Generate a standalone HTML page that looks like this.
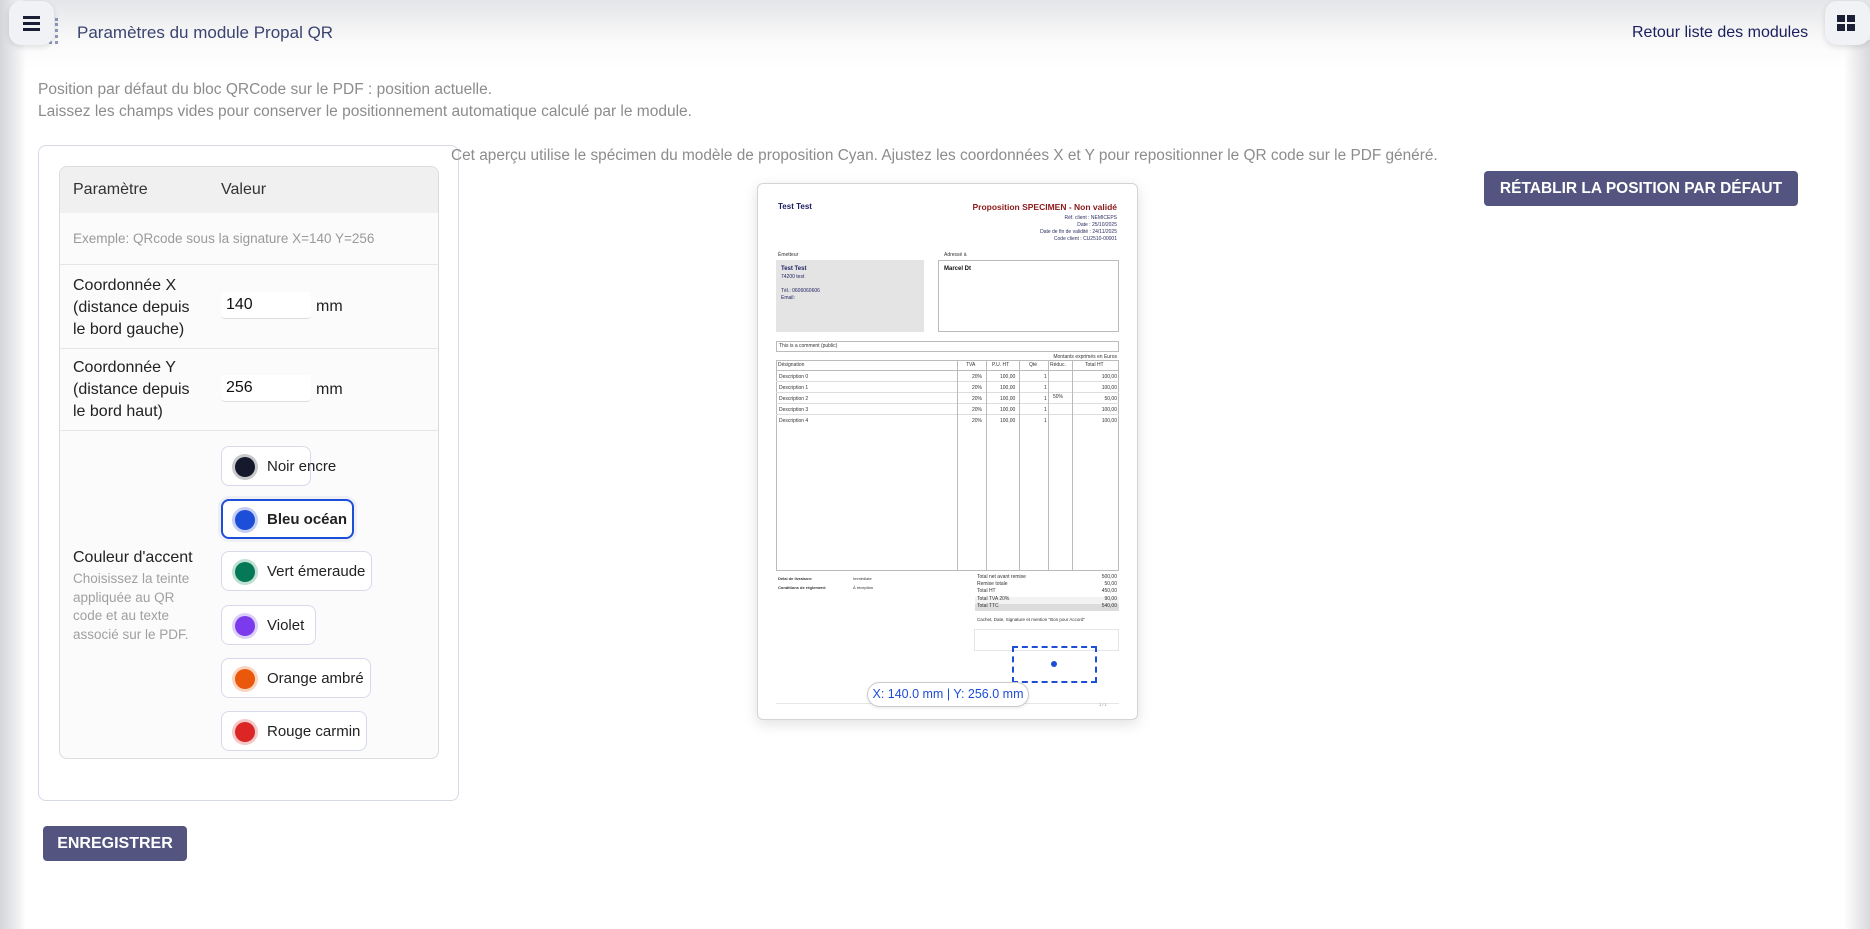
<!DOCTYPE html>
<html><head><meta charset="utf-8"><style>
*{box-sizing:border-box;margin:0;padding:0}
body{width:1870px;height:929px;overflow:hidden;background:#fff;font-family:"Liberation Sans",Arial,sans-serif;position:relative}
.abs{position:absolute}
.topbar{left:0;top:0;width:1870px;height:70px;background:linear-gradient(#e4e5e8,#fafafa 60%,#fff)}
.lshade{left:0;top:0;width:26px;height:929px;background:linear-gradient(90deg,#d4d5d9,#f4f4f6 80%,rgba(255,255,255,0))}
.rshade{right:0;top:40px;width:26px;height:889px;background:linear-gradient(270deg,#d8d9dd,rgba(255,255,255,0))}
.iconbtn{background:#f1f2f5;border-radius:12px;box-shadow:0 2px 6px rgba(0,0,0,.12)}
.t{white-space:nowrap}
.btn{background:#545480;color:#fff;font-weight:bold;border-radius:4px;text-align:center;font-size:16px;white-space:nowrap}
.opt{left:221px;height:40px;background:#fff;border:1px solid #d6daea;border-radius:8px;font-size:15px;color:#222;white-space:nowrap}
.opt .dot{position:absolute;left:13px;top:10px;width:20px;height:20px;border-radius:50%}
.opt span{position:absolute;left:45px;top:11px}
.p{font-size:5px;color:#333;white-space:nowrap;position:absolute}
.tb{position:absolute;border-top:1px solid #bbb}
.vl{position:absolute;border-left:1px solid #bbb;top:360px;height:211px}
</style></head><body>
<div class="abs topbar"></div>
<div class="abs lshade"></div>
<div class="abs rshade"></div>

<div class="abs" style="left:44px;top:18px;width:14px;height:26px;border:3px dotted #4a5a90;opacity:.6"></div>
<div class="abs iconbtn" style="left:9px;top:1px;width:45px;height:44px"></div>
<div class="abs" style="left:23px;top:16px;width:17px;height:3px;background:#1a1f36"></div>
<div class="abs" style="left:23px;top:22px;width:17px;height:3px;background:#1a1f36"></div>
<div class="abs" style="left:23px;top:28px;width:17px;height:3px;background:#1a1f36"></div>
<div class="abs t" style="left:77px;top:23px;font-size:17px;color:#3b4470">Paramètres du module Propal QR</div>
<div class="abs t" style="left:1632px;top:24px;font-size:16px;color:#1a1f5e">Retour liste des modules</div>
<div class="abs iconbtn" style="left:1825px;top:1px;width:45px;height:44px"></div>
<div class="abs" style="left:1837px;top:15px;width:8px;height:7px;background:#1a1f36"></div>
<div class="abs" style="left:1847px;top:15px;width:8px;height:7px;background:#1a1f36"></div>
<div class="abs" style="left:1837px;top:24px;width:8px;height:7px;background:#1a1f36"></div>
<div class="abs" style="left:1847px;top:24px;width:8px;height:7px;background:#1a1f36"></div>

<div class="abs t" style="left:38px;top:81px;font-size:15.5px;color:#8c8c8c">Position par défaut du bloc QRCode sur le PDF : position actuelle.</div>
<div class="abs t" style="left:38px;top:103px;font-size:15.5px;color:#8c8c8c">Laissez les champs vides pour conserver le positionnement automatique calculé par le module.</div>

<div class="abs" style="left:38px;top:145px;width:421px;height:656px;border:1px solid #d6dae6;border-radius:8px;background:#fff"></div>
<div class="abs" style="left:59px;top:166px;width:380px;height:593px;border:1px solid #dcdcdc;border-radius:8px;background:#fbfbfb;overflow:hidden">
 <div style="height:46px;background:#f0f0f0"></div>
 <div style="position:absolute;top:97px;left:0;right:0;border-top:1px solid #e6e6e6"></div>
 <div style="position:absolute;top:181px;left:0;right:0;border-top:1px solid #e6e6e6"></div>
 <div style="position:absolute;top:263px;left:0;right:0;border-top:1px solid #e6e6e6"></div>
</div>
<div class="abs t" style="left:73px;top:181px;font-size:16px;color:#333">Paramètre</div>
<div class="abs t" style="left:221px;top:181px;font-size:16px;color:#333">Valeur</div>
<div class="abs t" style="left:73px;top:231px;font-size:13.5px;color:#9a9a9a">Exemple: QRcode sous la signature X=140 Y=256</div>
<div class="abs" style="left:73px;top:275px;font-size:16px;color:#222;line-height:22px">Coordonnée X<br>(distance depuis<br>le bord gauche)</div>
<div class="abs" style="left:221px;top:292px;width:90px;height:27px;background:#fff;border-bottom:1px solid #ddd;border-radius:4px;font-size:16px;padding:4px 5px;color:#111">140</div>
<div class="abs t" style="left:316px;top:298px;font-size:16px;color:#222">mm</div>
<div class="abs" style="left:73px;top:357px;font-size:16px;color:#222;line-height:22px">Coordonnée Y<br>(distance depuis<br>le bord haut)</div>
<div class="abs" style="left:221px;top:375px;width:90px;height:27px;background:#fff;border-bottom:1px solid #ddd;border-radius:4px;font-size:16px;padding:4px 5px;color:#111">256</div>
<div class="abs t" style="left:316px;top:381px;font-size:16px;color:#222">mm</div>

<div class="abs t" style="left:73px;top:549px;font-size:16px;color:#222">Couleur d'accent</div>
<div class="abs" style="left:73px;top:570px;font-size:13.5px;color:#a0a0a0;line-height:18.5px">Choisissez la teinte<br>appliquée au QR<br>code et au texte<br>associé sur le PDF.</div>

<div class="abs opt" style="top:446px;width:90px"><div class="dot" style="background:#141a2b;box-shadow:0 0 0 3px #c9c9cc"></div><span>Noir encre</span></div>
<div class="abs opt" style="top:499px;width:133px;border:2px solid #1d4ed8;box-shadow:0 0 0 3px #eef0f5"><div class="dot" style="left:12px;top:9px;background:#1d4ed8;box-shadow:0 0 0 3px #c4cdf2"></div><span style="left:44px;top:10px;font-weight:bold">Bleu océan</span></div>
<div class="abs opt" style="top:551px;width:151px"><div class="dot" style="background:#047857;box-shadow:0 0 0 3px #bfe0d3"></div><span>Vert émeraude</span></div>
<div class="abs opt" style="top:605px;width:95px"><div class="dot" style="background:#7c3aed;box-shadow:0 0 0 3px #ddd0f8"></div><span>Violet</span></div>
<div class="abs opt" style="top:658px;width:150px"><div class="dot" style="background:#ea580c;box-shadow:0 0 0 3px #f8d5c0"></div><span>Orange ambré</span></div>
<div class="abs opt" style="top:711px;width:146px"><div class="dot" style="background:#dc2626;box-shadow:0 0 0 3px #f4c8c8"></div><span>Rouge carmin</span></div>

<div class="abs btn" style="left:43px;top:826px;width:144px;height:35px;line-height:35px">ENREGISTRER</div>

<div class="abs t" style="left:451px;top:147px;font-size:15.4px;color:#8c8c8c">Cet aperçu utilise le spécimen du modèle de proposition Cyan. Ajustez les coordonnées X et Y pour repositionner le QR code sur le PDF généré.</div>
<div class="abs btn" style="left:1484px;top:171px;width:314px;height:35px;line-height:35px;font-size:15.5px">RÉTABLIR LA POSITION PAR DÉFAUT</div>

<!-- PDF page -->
<div class="abs" style="left:757px;top:183px;width:381px;height:537px;background:#fff;border:1px solid #d4d4d4;border-radius:6px;box-shadow:0 4px 14px rgba(0,0,0,.12)"></div>
<div class="abs t" style="left:778px;top:202px;font-size:8px;font-weight:bold;color:#1a1f5e">Test Test</div>
<div class="abs t" style="right:753px;top:202px;font-size:8.5px;font-weight:bold;color:#8b1a1a">Proposition SPECIMEN - Non validé</div>
<div class="p" style="right:753px;top:215px;text-align:right;line-height:7px;color:#2a2f5e">Réf. client : NEMICEPS<br>Date : 25/10/2025<br>Date de fin de validité : 24/11/2025<br>Code client : CU2510-00001</div>
<div class="p" style="left:778px;top:252px">Émetteur</div>
<div class="p" style="left:944px;top:252px">Adressé à</div>
<div class="abs" style="left:776px;top:260px;width:148px;height:72px;background:#e4e4e4"></div>
<div class="abs" style="left:938px;top:260px;width:181px;height:72px;border:1px solid #bbb"></div>
<div class="p" style="left:781px;top:266px;font-size:6px;font-weight:bold;color:#1a1f5e">Test Test</div>
<div class="p" style="left:781px;top:274px;color:#1a1f5e;line-height:7px">74200 test<br><br>Tél.: 0606060606<br>Email:</div>
<div class="p" style="left:944px;top:266px;font-size:6px;font-weight:bold;color:#111">Marcel Dt</div>
<div class="abs" style="left:776px;top:341px;width:343px;height:11px;border:1px solid #bbb"></div>
<div class="p" style="left:779px;top:343px">This is a comment (public)</div>
<div class="p" style="right:753px;top:354px">Montants exprimés en Euros</div>
<div class="abs" style="left:776px;top:360px;width:343px;height:211px;border:1px solid #bbb"></div>
<div class="tb" style="left:776px;width:343px;top:370px"></div>
<div class="tb" style="left:776px;width:343px;top:381px;border-color:#ddd"></div>
<div class="tb" style="left:776px;width:343px;top:392px;border-color:#ddd"></div>
<div class="tb" style="left:776px;width:343px;top:403px;border-color:#ddd"></div>
<div class="tb" style="left:776px;width:343px;top:414px;border-color:#ddd"></div>
<div class="vl" style="left:957px"></div><div class="vl" style="left:986px"></div><div class="vl" style="left:1019px"></div><div class="vl" style="left:1048px"></div><div class="vl" style="left:1072px"></div>
<div class="p" style="left:778px;top:362px">Désignation</div>
<div class="p" style="left:966px;top:362px">TVA</div><div class="p" style="left:992px;top:362px">P.U. HT</div><div class="p" style="left:1029px;top:362px">Qté</div><div class="p" style="left:1050px;top:362px">Réduc.</div><div class="p" style="left:1085px;top:362px">Total HT</div>
<div class="p" style="left:779px;top:372px;line-height:11px">Description 0<br>Description 1<br>Description 2<br>Description 3<br>Description 4</div>
<div class="p" style="left:972px;top:372px;line-height:11px">20%<br>20%<br>20%<br>20%<br>20%</div>
<div class="p" style="left:1000px;top:372px;line-height:11px">100,00<br>100,00<br>100,00<br>100,00<br>100,00</div>
<div class="p" style="left:1044px;top:372px;line-height:11px">1<br>1<br>1<br>1<br>1</div>
<div class="p" style="left:1053px;top:394px">50%</div>
<div class="p" style="right:753px;top:372px;line-height:11px;text-align:right">100,00<br>100,00<br>50,00<br>100,00<br>100,00</div>
<div class="p" style="left:778px;top:574px;font-weight:bold;font-size:4px;line-height:9px">Délai de livraison:<br>Conditions de règlement:</div>
<div class="p" style="left:853px;top:574px;font-size:4px;line-height:9px">Immédiate<br>À réception</div>
<div class="abs" style="left:975px;top:597px;width:144px;height:7px;background:#f2f2f2"></div>
<div class="abs" style="left:975px;top:604px;width:144px;height:7px;background:#dcdcdc"></div>
<div class="p" style="left:977px;top:574px;line-height:7.2px">Total net avant remise<br>Remise totale<br>Total HT<br>Total TVA 20%<br>Total TTC</div>
<div class="p" style="right:753px;top:574px;line-height:7.2px;text-align:right">500,00<br>50,00<br>450,00<br>90,00<br>540,00</div>
<div class="p" style="left:977px;top:617px;font-size:4.5px">Cachet, Date, Signature et mention "Bon pour Accord"</div>
<div class="abs" style="left:974px;top:629px;width:145px;height:22px;border:1px solid #e6e6e6"></div>
<div class="abs" style="left:1012px;top:646px;width:85px;height:37px;border:2px dashed #1d4ed8"></div>
<div class="abs" style="left:1051px;top:661px;width:6px;height:6px;border-radius:50%;background:#1d4ed8"></div>
<div class="tb" style="left:776px;width:343px;top:703px;border-color:#e6e6e6"></div>
<div class="p" style="left:1099px;top:702px;font-size:4px;color:#888">1 / 1</div>
<div class="abs t" style="left:867px;top:682px;width:162px;height:25px;background:#fff;border:1px solid #ccc;border-radius:13px;box-shadow:0 1px 3px rgba(0,0,0,.1);font-size:12.5px;color:#1d4ed8;text-align:center;line-height:23px">X: 140.0 mm | Y: 256.0 mm</div>
</body></html>
